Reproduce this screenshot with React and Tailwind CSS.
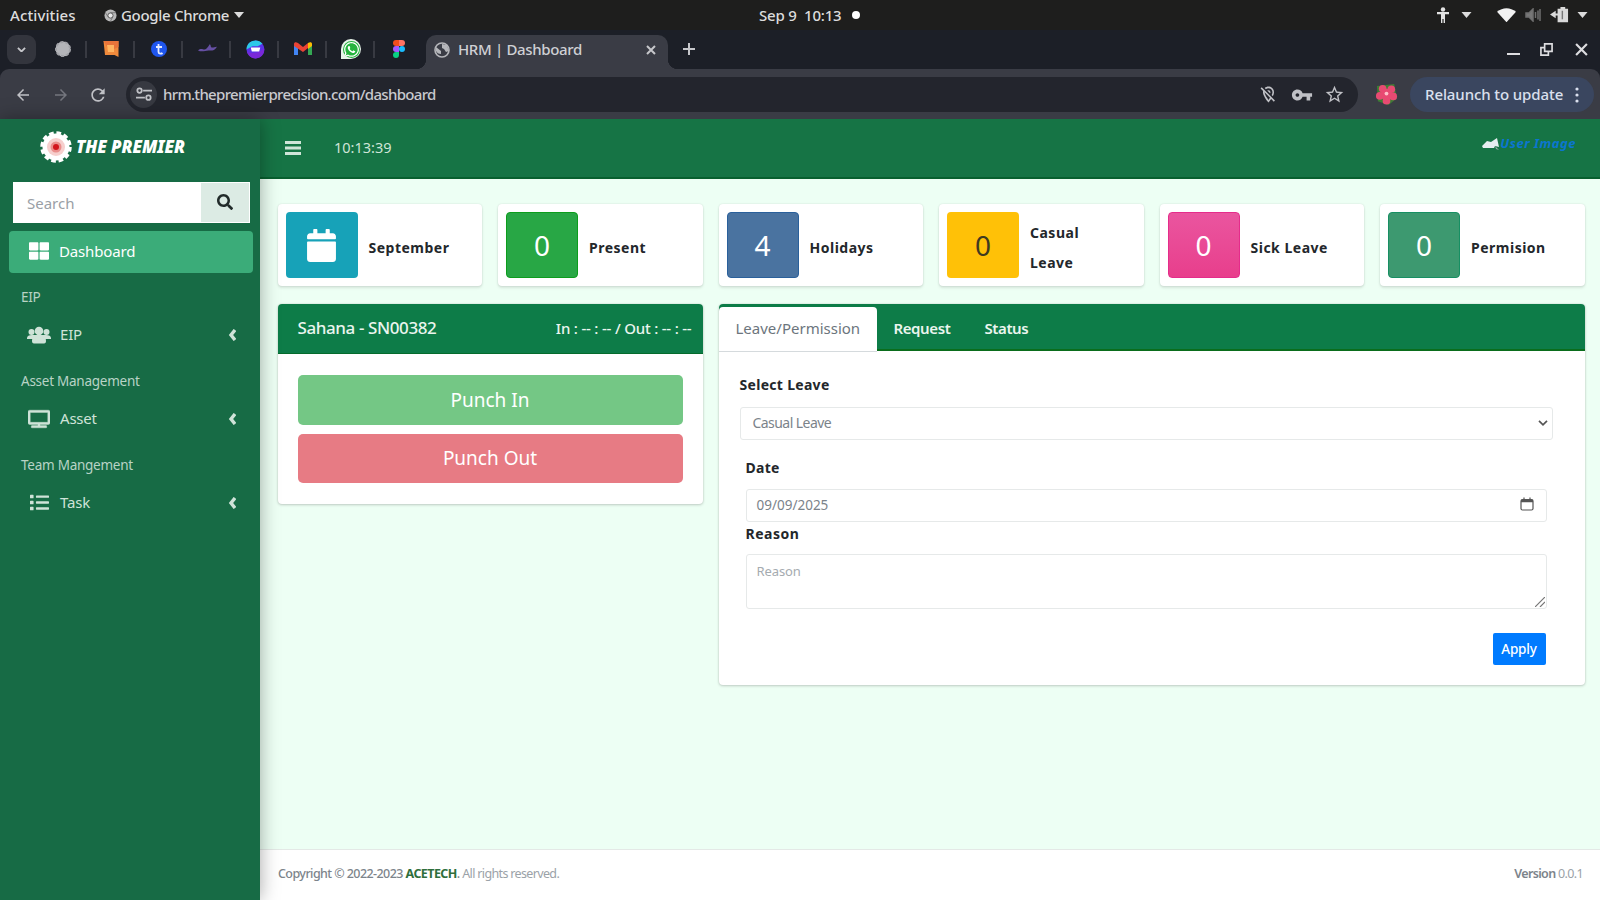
import {
  FaCalendar,
  FaList,
  FaSearch,
  FaThLarge,
  FaTv,
  FaWhatsapp,
} from 'react-icons/fa';
import { MdArrowBack, MdArrowForward, MdRefresh, MdStarBorder, MdVpnKey, MdOutlineLocationOff } from 'react-icons/md';

const stats = [
  { label: 'September', icon: true, box: 'bg-[#17a2b8] text-white' },
  { label: 'Present', value: 0, box: 'bg-[#28a745] text-white border border-[#0c9d1c]' },
  { label: 'Holidays', value: 4, box: 'bg-[#4a73a0] text-white border border-[#2a609b]' },
  { label: 'Casual Leave', value: 0, box: 'bg-[#ffc107] text-[#3f3a20]' },
  { label: 'Sick Leave', value: 0, box: 'bg-linear-to-b from-[#ea559f] to-[#e83e8c] text-white border border-[#e52c8b]' },
  { label: 'Permision', value: 0, box: 'bg-[#3d9970] text-white border border-[#178f63]' },
];

const Caret = ({ className }) => (
  <svg viewBox="0 0 10 6" className={className} fill="currentColor"><path d="M0 0h10L5 6z" /></svg>
);

function TopBar() {
  return (
    <div className="relative flex h-[30px] items-center bg-[#1e1e1d] text-[15px] font-medium text-[#dcdcdc]">
      <span className="ml-[10px] w-[94px] tracking-[0.1px]">Activities</span>
      <svg viewBox="0 0 14 14" className="mr-1 size-[13px]">
        <circle cx="7" cy="7" r="6.5" fill="#b9b9b9" />
        <circle cx="7" cy="7" r="2.8" fill="#e8e8e8" stroke="#555" />
        <path d="M7 4h6M4.5 8.5l-3-4.5M9.5 8.5L7 13" stroke="#666" strokeWidth=".8" />
      </svg>
      <span className="w-[109px] tracking-[-0.3px]">Google Chrome</span>
      <Caret className="ml-1 h-[6px] w-[10px]" />
      <div className="absolute left-[759px] flex items-center gap-[15px]">
        <span className="w-[83px] whitespace-pre tracking-[-0.2px]">Sep 9  10:13</span>
        <span className="-ml-[5px] size-[8px] rounded-full bg-white" />
      </div>
      <div className="ml-auto mr-[12px] flex items-center">
        <svg viewBox="0 0 14 16" className="w-[14px]" fill="#e2e2e2">
          <circle cx="7" cy="2.5" r="2.2" />
          <path d="M1 5h12v2.2H9V16H7.6v-4H6.4v4H5V7.2H1z" />
        </svg>
        <Caret className="ml-[11px] h-[6px] w-[11px]" />
        <svg viewBox="0 0 20 15" className="ml-[25px] w-[19px]" fill="#f2f2f2"><path d="M0 4C6-1 14-1 20 4L10 15z" /></svg>
        <svg viewBox="0 0 16 14" className="ml-[9px] w-[16px]" fill="none" stroke="#6f6f6f" strokeWidth="1.5">
          <path d="M1 5h3l4-4v12L4 9H1z" fill="#777" />
          <path d="M10.5 4v6M13 2.5v9M15 1v12" />
        </svg>
        <svg viewBox="0 0 20 18" className="ml-[9px] w-[19px]" fill="#d9d9d9">
          <path d="M8 3h3V1h5v2h3v14H8z" />
          <path d="M0 9l6-4v8zM5 8h4v2H5z" />
          <path d="M13 5v9" stroke="#777" strokeWidth="1.5" />
        </svg>
        <Caret className="ml-[8px] h-[6px] w-[11px]" />
      </div>
    </div>
  );
}

const favicons = [
  <svg viewBox="0 0 18 18" className="size-[18px]"><circle cx="9" cy="9" r="7.5" fill="#b4b5b9" /><circle cx="9" cy="9" r="7" fill="none" stroke="#a1a2a7" strokeWidth="2" strokeDasharray="3 2" /></svg>,
  <svg viewBox="0 0 18 18" className="size-[18px]"><path d="M1.5 1h15v16l-4-2H3z" fill="#f08a3c" /><path d="M1.5 1h15v6l-9 4z" fill="#e8743a" /><path d="M5 5h7v7H6z" fill="#ffb561" /></svg>,
  <svg viewBox="0 0 18 18" className="size-[18px]"><circle cx="9" cy="9" r="8" fill="#1f56ee" /><path d="M8.5 4v8c0 2 3 2 4 1M6 7h6" fill="none" stroke="#e5ecff" strokeWidth="1.8" /></svg>,
  <svg viewBox="0 0 20 18" className="w-[19px]"><path d="M0 11c4-4 6 1 9-2s3-6 4-4-1 4 7 2c-3 5-6 4-9 4s-7 2-11 0z" fill="#6650a4" /></svg>,
  <svg viewBox="0 0 18 18" className="size-[19px]"><circle cx="9" cy="9" r="8.5" fill="#5a32e6" /><path d="M.5 9a8.5 8.5 0 0 1 15-5.5L11 6H6z" fill="#2cc8e8" /><path d="M1 11c2 2 11 2 16-3 1 6-4 9.5-8 9.5S2 15 1 11z" fill="#7a28d8" /><path d="M4.5 7h9l-1 4h-7z" fill="#fff" /></svg>,
  <svg viewBox="0 0 18 14" className="w-[18px]"><path d="M0 2v11h4V5z" fill="#4285f4" /><path d="M18 2v11h-4V5z" fill="#34a853" /><path d="M0 2c0-2 2-2.5 4-1l5 4 5-4v5L9 10 0 4z" fill="#ea4335" /><path d="M14 1c2-1.5 4-1 4 1v2l-4 3z" fill="#fbbc04" /></svg>,
  <span className="flex size-[20px] items-center justify-center rounded-full rounded-bl-sm bg-[#e9f5ec]"><FaWhatsapp className="size-[17px] rounded-full bg-[#25b43e] text-white" /></span>,
  <svg viewBox="0 0 12 18" className="h-[18px] w-[12px]"><path d="M3 0h3v6H3a3 3 0 0 1 0-6z" fill="#f24e1e" /><path d="M6 0h3a3 3 0 0 1 0 6H6z" fill="#ff7262" /><path d="M3 6h3v6H3a3 3 0 0 1 0-6z" fill="#a259ff" /><circle cx="9" cy="9" r="3" fill="#1abcfe" /><path d="M3 12h3v3a3 3 0 1 1-3-3z" fill="#0acf83" /></svg>,
];

function TabStrip() {
  return (
    <div className="flex h-[39px] bg-[#1c1f27] text-[#c6c7cb]">
      <div className="ml-[7px] mt-[5px] flex size-[29px] items-center justify-center rounded-[9px] bg-[#33353d]">
        <svg viewBox="0 0 10 6" className="w-[9px]" fill="none" stroke="currentColor" strokeWidth="2"><path d="M1 1l4 4 4-4" /></svg>
      </div>
      <div className="ml-[3px] flex h-[38px] items-center">
        {favicons.map((icon, i) => (
          <div key={i} className="relative flex w-[48px] items-center justify-center">
            {icon}
            {i < favicons.length - 1 && <span className="absolute right-0 h-[17px] w-[2px] bg-[#383a42]" />}
          </div>
        ))}
      </div>
      <div className="relative ml-[3px] mt-[5px] flex h-[34px] w-[242px] items-center rounded-t-[10px] bg-[#3a3c45] pb-[5px] pl-[8px]">
        <span className="absolute -left-[10px] bottom-0 size-[10px] bg-[radial-gradient(circle_at_0_0,#1c1f27_10px,#3a3c45_10.5px)]" />
        <span className="absolute -right-[10px] bottom-0 size-[10px] bg-[radial-gradient(circle_at_100%_0,#1c1f27_10px,#3a3c45_10.5px)]" />
        <svg viewBox="0 0 16 16" className="size-[16px]"><circle cx="8" cy="8" r="7" fill="none" stroke="#b5b6ba" strokeWidth="1.6" /><path d="M2 5l5 4v3C3 12 1 9 2 5zM8 2l5 1 2 6-3 1-2-3-2-1z" fill="#b5b6ba" /></svg>
        <span className="ml-[8px] text-[15px] font-medium tracking-[-0.35px] text-[#cfd0d4]">HRM | Dashboard</span>
        <svg viewBox="0 0 10 10" className="ml-auto mr-[12px] size-[10px]" stroke="currentColor" strokeWidth="2"><path d="M1 1l8 8M9 1L1 9" /></svg>
      </div>
      <svg viewBox="0 0 12 12" className="ml-[15px] mt-[13px] size-[12px]" stroke="currentColor" strokeWidth="2"><path d="M6 0v12M0 6h12" /></svg>
      <div className="ml-auto mr-[12px] flex h-[38px] items-center gap-[20px] text-[#dddde0]">
        <span className="mt-[9px] h-[2px] w-[13px] bg-current" />
        <svg viewBox="0 0 14 14" className="size-[13px]" fill="none" stroke="currentColor" strokeWidth="1.8"><path d="M5 1h8v8H5zM9 9v4H1V5h4" /></svg>
        <svg viewBox="0 0 12 12" className="ml-[2px] size-[13px]" stroke="currentColor" strokeWidth="2"><path d="M1 1l10 10M11 1L1 11" /></svg>
      </div>
    </div>
  );
}

function Toolbar() {
  return (
    <div className="bg-[#1c1f27]">
      <div className="flex h-[50px] items-center rounded-t-[9px] bg-[#3a3c45] pt-[2px] pb-px text-[#c0c1c6]">
        <MdArrowBack className="ml-[14px] size-[18px]" />
        <MdArrowForward className="ml-[20px] size-[18px] text-[#74767e]" />
        <MdRefresh className="ml-[18px] size-[20px]" />
        <div className="ml-[18px] flex h-[35px] w-[1232px] items-center rounded-full bg-[#23252d]">
          <div className="ml-[4px] flex size-[27px] items-center justify-center rounded-full bg-[#373941]">
            <svg viewBox="0 0 18 16" className="w-[16px]" fill="none" stroke="currentColor" strokeWidth="2">
              <path d="M8 4h10M0 12h10" /><circle cx="4" cy="4" r="2.5" /><circle cx="14" cy="12" r="2.5" />
            </svg>
          </div>
          <span className="ml-[6px] text-[15px] font-medium tracking-[-0.68px] text-[#c9cacf]">hrm.thepremierprecision.com/dashboard</span>
          <div className="ml-auto mr-[13px] flex items-center">
            <MdOutlineLocationOff className="size-[19px]" />
            <MdVpnKey className="ml-[13px] size-[22px]" />
            <MdStarBorder className="ml-[11px] size-[21px]" />
          </div>
        </div>
        <svg viewBox="0 0 24 24" className="ml-[17px] size-[23px]">
          <path d="M2 3l18-2 3 15-9 7-11-4z" fill="#3d7d34" />
          <g fill="#e84a72"><circle cx="8" cy="6" r="4" /><circle cx="17" cy="6.5" r="4" /><circle cx="19" cy="14" r="4" /><circle cx="12" cy="18.5" r="4" /><circle cx="5" cy="13.5" r="4" /><circle cx="12" cy="12" r="6" /></g>
          <circle cx="12" cy="11" r="2" fill="#ffc0ca" />
        </svg>
        <div className="ml-[12px] flex h-[35px] w-[184px] items-center rounded-full bg-[#3a465f] pl-[15px] text-[#dae0ee]">
          <span className="w-[138px] text-[15px] font-medium whitespace-nowrap tracking-[-0.1px]">Relaunch to update</span>
          <svg viewBox="0 0 4 16" className="ml-[12px] h-[16px] w-[4px]" fill="currentColor"><circle cx="2" cy="2" r="1.6" /><circle cx="2" cy="8" r="1.6" /><circle cx="2" cy="14" r="1.6" /></svg>
        </div>
      </div>
    </div>
  );
}

const UsersIcon = () => (
  <svg viewBox="0 0 24 18" className="w-[24px]" fill="currentColor">
    <circle cx="4.5" cy="6" r="3" />
    <circle cx="19.5" cy="6" r="3" />
    <circle cx="12" cy="5" r="4.3" />
    <path d="M0 12c0-2 2-3 5-3h14c3 0 5 1 5 3v1H0z" />
    <path d="M5 15c0-4 3-5.5 7-5.5s7 1.5 7 5.5c0 1.5-.5 2.5-2 2.5H7c-1.5 0-2-1-2-2.5z" />
  </svg>
);

const NavItem = ({ icon, label }) => (
  <div className="flex h-[42px] items-center pl-[18px] pr-[15px] pb-[3px] text-[15px] text-[#cfe3d8]">
    <span className="flex w-[24px] justify-center">{icon}</span>
    <span className="ml-[9px] tracking-[-0.2px]">{label}</span>
    <svg viewBox="0 0 8 12" className="ml-auto h-[12px] w-[8px]" fill="none" stroke="currentColor" strokeWidth="3.4"><path d="M7 1L3 6l4 5" /></svg>
  </div>
);

const NavHeader = ({ children }) => (
  <div className="h-[42px] pl-[12px] pt-[14px] text-[13.5px] leading-[20px] tracking-[-0.25px] text-[#b9d3c5]">{children}</div>
);

function Sidebar() {
  return (
    <aside className="relative z-10 h-[781px] w-[260px] shrink-0 bg-[#176b45] px-[9px] shadow-[0_0_18px_rgba(0,0,0,0.35)]">
      <div className="flex h-[59px] items-center pb-[3px] pl-[31px]">
        <svg viewBox="0 0 32 32" className="size-[32px]">
          <circle cx="16" cy="16" r="13.5" fill="#fff" />
          <circle cx="16" cy="16" r="14" fill="none" stroke="#fff" strokeWidth="3.5" strokeDasharray="4.6 2.73" />
          <circle cx="16" cy="16" r="9" fill="#f6cfcd" />
          <circle cx="16" cy="16" r="5.5" fill="#ea8e8c" />
          <circle cx="16" cy="16" r="3" fill="#d2151d" />
        </svg>
        <span className="ml-[4px] text-[17px] font-black italic tracking-[-0.1px] whitespace-nowrap text-white">THE PREMIER</span>
      </div>
      <div className="ml-[4px] mt-[4px] flex h-[41px] w-[237px] bg-white">
        <span className="flex-1 pl-[14px] text-[15px] leading-[42px] text-[#9aa0a6]">Search</span>
        <div className="flex w-[49px] items-center justify-center border border-l-0 border-white bg-[#dcebe4]">
          <FaSearch className="mb-[2px] ml-[-1px] size-[16px] text-[#222b2a]" />
        </div>
      </div>
      <div className="mt-[8px] flex h-[42px] w-[244px] items-center rounded-[4px] bg-[#3bac79] pb-[2px] pl-[18px] text-[15px] text-white">
        <span className="flex w-[24px] justify-center"><FaThLarge className="size-[20px]" /></span>
        <span className="ml-[8px] tracking-[-0.15px]">Dashboard</span>
      </div>
      <NavHeader>EIP</NavHeader>
      <NavItem icon={<UsersIcon />} label="EIP" />
      <NavHeader>Asset Management</NavHeader>
      <NavItem icon={<FaTv className="size-[22px]" stroke="currentColor" strokeWidth="12" />} label="Asset" />
      <NavHeader>Team Mangement</NavHeader>
      <NavItem icon={<FaList className="size-[19px]" />} label="Task" />
    </aside>
  );
}

function Header() {
  return (
    <header className="flex h-[60px] items-center border-b-2 border-[#08602f] bg-[#167445] pl-[25px] text-[#cfe5d8]">
      <svg viewBox="0 0 16 14" className="h-[14px] w-[16px]" stroke="currentColor" strokeWidth="2.8"><path d="M0 1.5h16M0 7h16M0 12.5h16" /></svg>
      <span className="ml-[33px] text-[14.5px] tracking-[0px]">10:13:39</span>
      <div className="mb-[11px] ml-auto mr-[24px] flex items-center">
        <svg viewBox="0 0 18 14" className="mt-[3px] w-[18px]">
          <path d="M0 9l5-5 4 1 6-4 2 9-4-1-1 2H1z" fill="#e6eef0" />
          <path d="M13 9l4 4-3-1z" fill="#9aa9a4" />
        </svg>
        <span className="text-[13px] leading-[20px] font-bold italic whitespace-nowrap tracking-[0.5px] text-[#0b76cf]">User Image</span>
      </div>
    </header>
  );
}

function StatCard({ label, value, icon, box }) {
  return (
    <div className="flex h-[82px] rounded-[4px] bg-white p-[8px] shadow-[0_0_2px_rgba(0,0,0,0.13),0_2px_3px_rgba(0,0,0,0.1)]">
      <div className={`flex h-[66px] w-[72px] shrink-0 items-center justify-center rounded-[4px] text-[28px] ${box}`}>
        {icon ? <FaCalendar className="size-[33px]" /> : value}
      </div>
      <div className="flex items-center pl-[11px] pt-[5px] text-[14px] leading-[30px] font-bold tracking-[0.5px] text-[#23272b]">
        <span className={label === 'Casual Leave' ? 'w-[60px]' : 'whitespace-nowrap'}>{label}</span>
      </div>
    </div>
  );
}

function PunchPanel() {
  return (
    <section className="col-span-2 h-[200px] self-start rounded-[4px] bg-white shadow-[0_0_2px_rgba(0,0,0,0.13),0_1px_3px_rgba(0,0,0,0.18)]">
      <div className="flex h-[50px] items-center justify-between rounded-t-[4px] border-b border-[#056b2c] bg-[#0d7c48] pb-[2px] pl-[20px] pr-[11px] text-[#eaf5ee]">
        <span className="text-[17px] font-medium tracking-[-0.4px]">Sahana - SN00382</span>
        <span className="pt-[2px] text-[15px] font-medium tracking-[-0.2px]">In : -- : -- / Out : -- : --</span>
      </div>
      <div className="flex flex-col gap-[9px] px-[20px] pt-[21px] text-[19px] text-white">
        <button className="h-[50px] rounded-[5px] bg-[#74c785]">Punch In</button>
        <button className="h-[49px] rounded-[5px] bg-[#e77b84]">Punch Out</button>
      </div>
    </section>
  );
}

function LeavePanel() {
  return (
    <section className="col-span-4 h-[381px] rounded-[4px] bg-white shadow-[0_0_2px_rgba(0,0,0,0.13),0_1px_3px_rgba(0,0,0,0.18)]">
      <div className="flex h-[47px] rounded-t-[4px] border-b-2 border-[#0a6d1c] bg-[#0d7c48] pt-[3px] text-[15px] leading-[43px]">
        <span className="h-[45px] w-[158px] rounded-t-[4px] border-b border-[#d5dadd] bg-white pl-[17px] tracking-[0px] text-[#6c757d]">Leave/Permission</span>
        <span className="ml-[17px] w-[91px] font-semibold tracking-[-0.4px] text-[#eaf5ee]">Request</span>
        <span className="font-semibold tracking-[-0.4px] text-[#eaf5ee]">Status</span>
      </div>
      <div className="pl-[21px] pr-[32px] pt-[24px] text-[14px] text-[#23272b]">
        <label className="block h-[32px] leading-[20px] font-bold tracking-[0.3px]">Select Leave</label>
        <div className="flex h-[33px] items-center justify-between rounded-[3px] border border-[#e6e9e9] pl-[12px] pr-[4px] pb-[2px] text-[14px] tracking-[-0.55px] text-[#7b838a]">
          Casual Leave
          <svg viewBox="0 0 10 6" className="w-[10px]" fill="none" stroke="#555" strokeWidth="1.7"><path d="M1 .8l4 4 4-4" /></svg>
        </div>
        <div className="px-[6px] pt-[18px]">
          <label className="block h-[31px] leading-[20px] font-bold tracking-[0.3px]">Date</label>
          <div className="flex h-[33px] items-center justify-between rounded-[3px] border border-[#e6e9e9] pl-[10px] pr-[12px] text-[13.5px] tracking-[0px] text-[#7b838a]">
            09/09/2025
            <svg viewBox="0 0 14 14" className="mb-[3px] size-[14px]" fill="none" stroke="#555" strokeWidth="1.2">
              <rect x="1" y="2.5" width="12" height="10.5" rx="1.5" />
              <path d="M1 4h12" strokeWidth="2.5" /><path d="M4 .5v2M10 .5v2" />
            </svg>
          </div>
          <label className="block h-[32px] pt-[2px] leading-[20px] font-bold tracking-[0.5px]">Reason</label>
          <div className="relative h-[55px] rounded-[3px] border border-[#e6e9e9] pl-[10px] pt-[6px] text-[13px] leading-[20px] tracking-[-0.1px] text-[#a5abb0]">
            Reason
            <svg viewBox="0 0 10 10" className="absolute right-[1px] bottom-[1px] size-[10px]" stroke="#777" strokeWidth="1.2"><path d="M0 10L10 0M5 10l5-5" /></svg>
          </div>
          <div className="mt-[24px] flex justify-end pr-[1px]">
            <button className="h-[32px] w-[53px] rounded-[2px] bg-[#007bff] text-[13.5px] font-medium tracking-[-0.2px] text-white">Apply</button>
          </div>
        </div>
      </div>
    </section>
  );
}

export default function App() {
  return (
    <div className="h-[900px] w-[1600px] overflow-hidden bg-[#edfff4] font-['Noto_Sans',sans-serif]">
      <TopBar />
      <TabStrip />
      <Toolbar />
      <div className="flex">
        <Sidebar />
        <main className="flex h-[781px] flex-1 flex-col">
          <Header />
          <div className="grid flex-1 grid-cols-6 content-start gap-x-[16px] gap-y-[18px] pl-[17.5px] pr-[15.5px] pt-[25px]">
            {stats.map((s) => (
              <StatCard key={s.label} {...s} />
            ))}
            <PunchPanel />
            <LeavePanel />
          </div>
          <footer className="flex h-[51px] items-center justify-between border-t border-[#e4e9e6] bg-white pb-[2px] pl-[18px] pr-[17px] text-[12.5px] tracking-[-0.65px] text-[#9ba2a8]">
            <span>
              <b className="font-medium tracking-[-0.57px] text-[#7c848b]">Copyright © 2022-2023 <span className="font-bold text-[#2f6f3c]">ACETECH</span>.</b> All rights reserved.
            </span>
            <span><b className="font-semibold text-[#7c848b]">Version</b> 0.0.1</span>
          </footer>
        </main>
      </div>
    </div>
  );
}
